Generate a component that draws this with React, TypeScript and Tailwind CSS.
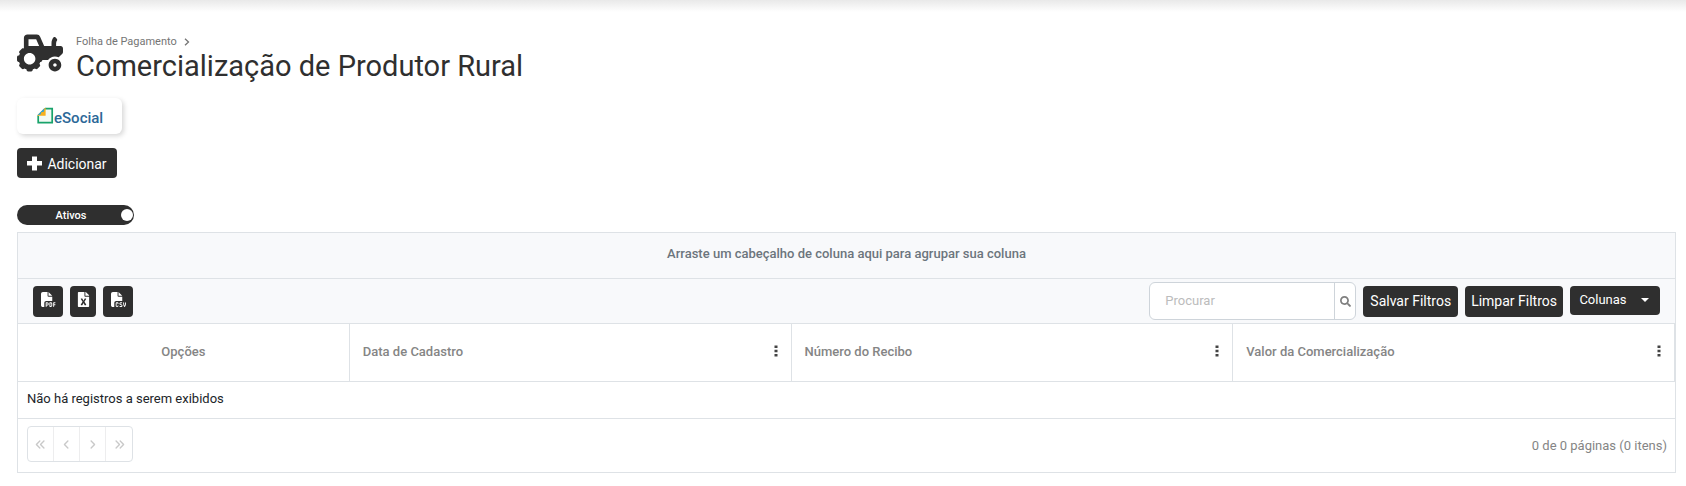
import { useState } from "react";
import { FaTractor, FaFileExcel, FaSearch } from "react-icons/fa";
import { FaAngleLeft, FaAnglesLeft, FaAnglesRight, FaAngleRight, FaFilePdf, FaFileCsv } from "react-icons/fa6";

function ESocialLogo() {
  return (
    <svg width="68" height="18" viewBox="0 0 68 18" aria-label="eSocial" role="img">
      <path d="M9 1.700H16.200V15.600H2.200V8.500" fill="#f3faf4" stroke="#18a36b" strokeWidth="1.700" />
      <path d="M1.300 8.800V8.300L8.600 0.900H9.600V8.800Z" fill="#f6b01c" />
      <path d="M1.300 8.300L8.600 0.900L7.800 4.800L5.300 5.300L4.600 7.600Z" fill="#2ea3d6" />
      <text x="18" y="15.500" fill="#2c6898" fontSize="15" fontWeight="500" fontFamily="Roboto, sans-serif">eSocial</text>
    </svg>
  );
}

function PlusIcon() {
  return (
    <svg width="15" height="15" viewBox="0 0 15 15" aria-hidden="true">
      <path d="M5 0.500H10V5H15V9.500H10V14.500H5V9.500H0V5H5Z" fill="currentColor" />
    </svg>
  );
}

function DotsIcon() {
  return (
    <svg width="4" height="12" viewBox="0 0 4 12" aria-hidden="true">
      <path d="M0.500 0.500h3v2.500h-3ZM0.500 4.800h3v2.500h-3ZM0.500 9.100h3v2.500h-3Z" fill="#444" />
    </svg>
  );
}

const columns = ["Data de Cadastro", "Número do Recibo", "Valor da Comercialização"];
const dark = "flex items-center justify-center rounded bg-[#2f2f2f] text-white";
const pageButton = "flex w-[26px] items-center justify-center border-r border-[#ededee] last:border-r-0";

export default function App() {
  const [active, setActive] = useState(true);
  return (
    <div className="bg-white font-[Roboto,sans-serif] text-[#2f2f2f]">
      <div className="h-3 bg-linear-to-b from-[#e9e9e9] to-white" />
      <main className="pt-[22px] pr-[10px] pl-[17px]">
        <header className="flex gap-[13px]">
          <FaTractor className="h-[38px] w-[46px]" />
          <div>
            <nav className="flex h-4 items-center gap-[7px] text-[11px] text-[#757575]">
              <a href="#folha">Folha de Pagamento</a>
              <svg width="6" height="8" viewBox="0 0 6 8" fill="none" stroke="currentColor" strokeWidth="1.300" aria-hidden="true"><path d="M1 0.700L4.500 4L1 7.300" /></svg>
            </nav>
            <h1 className="text-[29px] leading-8">Comercialização de Produtor Rural</h1>
          </div>
        </header>
        <a href="#esocial" className="mt-4 flex h-9 w-[105px] items-center justify-center rounded-md bg-white shadow-[2px_2px_5px_rgba(0,0,0,0.16)]">
          <ESocialLogo />
        </a>
        <button className={`${dark} mt-[14px] h-[30px] w-[100px] gap-[5px] pt-px text-sm`}>
          <PlusIcon />
          Adicionar
        </button>
        <button role="switch" aria-checked={active} onClick={() => setActive(!active)} className="mt-[27px] flex h-5 w-[117px] items-center rounded-full bg-[#2f2f2f] pr-px pl-1 text-[11px] font-medium text-white">
          <span className="flex-1 pt-[2px] text-center">{active ? "Ativos" : "Inativos"}</span>
          <span className="size-3 rounded-full bg-white" />
        </button>
        <section className="mt-[7px] border border-[#dee2e6]">
          <div className="flex h-[46px] items-center justify-center border-b border-[#dee2e6] bg-[#f8f9fb] pb-1 text-[13px] font-medium text-[#6c757d]">
            Arraste um cabeçalho de coluna aqui para agrupar sua coluna
          </div>
          <div className="flex h-[45px] items-center justify-between border-b border-[#dee2e6] bg-[#f8f9fb] px-[15px]">
            <div className="flex gap-[7px]">
              <button aria-label="PDF" className={`${dark} h-[31px] w-[30px]`}><FaFilePdf className="mb-[3px] size-[15px]" /></button>
              <button aria-label="Excel" className={`${dark} h-[31px] w-[26px]`}><FaFileExcel className="mb-[3px] size-[15px]" /></button>
              <button aria-label="CSV" className={`${dark} h-[31px] w-[30px]`}><FaFileCsv className="mb-[3px] size-[15px]" /></button>
            </div>
            <div className="flex items-center gap-[7px]">
              <div className="flex h-[38px] w-[207px] overflow-hidden rounded-md border border-[#ced4da] bg-white">
                <input aria-label="Procurar" placeholder="Procurar" className="min-w-0 flex-1 px-[15px] text-[13px] outline-none placeholder:text-[#bcbcbc]" />
                <button aria-label="Pesquisar" className="flex w-[21px] items-center justify-center border-l border-[#ced4da] text-[#808080]"><FaSearch className="size-[11px]" /></button>
              </div>
              <button className={`${dark} h-[31px] px-[7px] pb-px text-sm`}>Salvar Filtros</button>
              <button className={`${dark} h-[31px] px-[6px] pb-px text-sm`}>Limpar Filtros</button>
              <button className={`${dark} mb-[2px] h-[29px] w-[90px] gap-[14px] pr-[2px] text-[13px]`}>
                Colunas
                <svg width="8" height="4" viewBox="0 0 8 4" aria-hidden="true"><path d="M0 0H8L4 4Z" fill="currentColor" /></svg>
              </button>
            </div>
          </div>
          <table className="w-full table-fixed border-collapse text-[13px]">
            <thead>
              <tr className="h-[57px] border-b border-[#dee2e6] text-[#858585]">
                <th className="w-[20%] border-r border-[#dee2e6] pb-[2px] font-medium">Opções</th>
                {columns.map((name) => (
                  <th key={name} className="border-r border-[#dee2e6] pr-[13px] pb-[2px] pl-[13px] font-medium">
                    <div className="flex items-center justify-between">
                      {name}
                      <button aria-label={`Menu ${name}`}><DotsIcon /></button>
                    </div>
                  </th>
                ))}
              </tr>
            </thead>
            <tbody>
              <tr className="h-[37px] border-b border-[#dee2e6]">
                <td colSpan={4} className="px-[9px] pb-[2px] text-[#212529]">Não há registros a serem exibidos</td>
              </tr>
            </tbody>
          </table>
          <footer className="flex h-[53px] items-center justify-between pr-2 pl-[9px]">
            <div className="mb-[2px] flex h-9 rounded border border-[#dee2e6] text-[#c9c9c9]">
              <button aria-label="Primeira página" className={pageButton}><FaAnglesLeft className="size-[11px]" /></button>
              <button aria-label="Página anterior" className={pageButton}><FaAngleLeft className="size-[11px]" /></button>
              <button aria-label="Próxima página" className={pageButton}><FaAngleRight className="size-[11px]" /></button>
              <button aria-label="Última página" className={pageButton}><FaAnglesRight className="size-[11px]" /></button>
            </div>
            <span className="pt-px text-[13px] text-[#858585]">0 de 0 páginas (0 itens)</span>
          </footer>
        </section>
      </main>
    </div>
  );
}
